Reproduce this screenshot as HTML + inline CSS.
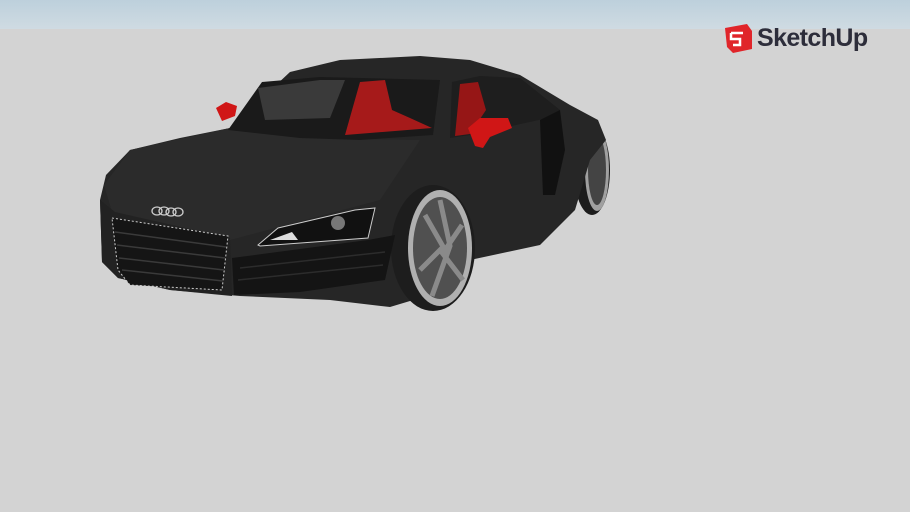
<!DOCTYPE html>
<html><head><style>
html,body{margin:0;padding:0;width:910px;height:512px;overflow:hidden;background:#d3d3d3;}
.sky{position:absolute;left:0;top:0;width:910px;height:29px;background:linear-gradient(#bdd0dc,#cfdbe2);}
.logo{position:absolute;left:757px;top:24px;font-family:"Liberation Sans",sans-serif;font-weight:bold;font-size:25px;color:#2d2d3a;letter-spacing:-0.6px;}
svg{position:absolute;left:0;top:0;}
</style></head><body>
<div class="sky"></div>
<svg width="910" height="512">
  <polygon points="725,28 747,24 752,31 752,49 733,53 727,47" fill="#e0252a"/>
  <path d="M731,33 h12 M731,33 v6 h9 v6 h-7" stroke="#fff" stroke-width="2.5" fill="none"/>
  <ellipse cx="592" cy="170" rx="18" ry="45" fill="#1c1c1c"/>
  <ellipse cx="597" cy="170" rx="12" ry="41" fill="#a0a0a0"/>
  <ellipse cx="597" cy="170" rx="9" ry="35" fill="#444"/>
  <path d="M100,200 L106,175 L130,150 L180,138 L230,128 L290,72 L340,60 L420,56 L470,60 L520,75 L570,105 L598,120 L606,140 L590,160 L575,210 L540,245 L470,260 L430,295 L390,307 L330,300 L240,296 L170,290 L118,278 L102,262 Z" fill="#262626"/>
  <path d="M104,185 L130,150 L230,128 L300,138 L420,140 L380,200 L230,240 L112,212 Z" fill="#2b2b2b"/>
  <path d="M228,130 L262,82 L320,77 L440,80 L433,135 L360,140 L300,138 Z" fill="#1a1a1a"/>
  <path d="M258,88 L320,80 L345,80 L330,118 L265,120 Z" fill="#3a3a3a"/>
  <path d="M452,82 L480,76 L520,78 L560,110 L548,118 L470,135 L450,138 Z" fill="#1e1e1e"/>
  <path d="M360,82 L385,80 L392,110 L410,118 L432,128 L345,135 Z" fill="#a61a1a"/>
  <path d="M460,84 L478,82 L486,110 L470,134 L455,136 Z" fill="#961616"/>
  <path d="M216,108 L226,102 L237,106 L235,116 L222,121 Z" fill="#d01616"/>
  <path d="M468,128 L480,118 L508,118 L512,128 L490,137 L483,148 L475,146 Z" fill="#d01616"/>
  <path d="M540,120 L560,110 L565,150 L555,195 L543,195 Z" fill="#111"/>
  <ellipse cx="433" cy="248" rx="42" ry="63" fill="#1d1d1d"/>
  <ellipse cx="440" cy="248" rx="32" ry="58" fill="#b0b0b0"/>
  <ellipse cx="440" cy="248" rx="27" ry="51" fill="#505050"/>
  <path d="M440,200 L450,246 L432,296 M425,215 L445,250 L462,225 M420,270 L440,250 L463,280" stroke="#8a8a8a" stroke-width="5" fill="none"/>
  <path d="M100,200 L115,212 L230,238 L232,296 L170,290 L118,278 L102,262 Z" fill="#222"/>
  <path d="M112,218 L228,236 L222,290 L130,285 L118,270 Z" fill="#151515" stroke="#ccc" stroke-width="1" stroke-dasharray="2,2"/>
  <g stroke="#3a3a3a" stroke-width="1.5">
   <line x1="115" y1="232" x2="226" y2="247"/><line x1="117" y1="245" x2="225" y2="258"/>
   <line x1="119" y1="258" x2="224" y2="270"/><line x1="122" y1="270" x2="223" y2="281"/>
  </g>
  <g fill="none" stroke="#ccc" stroke-width="1.3">
   <ellipse cx="157" cy="211" rx="5" ry="4"/><ellipse cx="164" cy="211" rx="5" ry="4"/>
   <ellipse cx="171" cy="212" rx="5" ry="4"/><ellipse cx="178" cy="212" rx="5" ry="4"/>
  </g>
  <path d="M258,245 L278,228 L355,210 L375,208 L368,238 L260,246 Z" fill="#111" stroke="#ccc" stroke-width="1"/>
  <circle cx="338" cy="223" r="7" fill="#777"/>
  <path d="M270,240 L292,232 L298,240 Z" fill="#ddd"/>
  <path d="M232,258 L368,240 L395,235 L385,280 L300,292 L234,295 Z" fill="#141414"/>
  <g stroke="#2c2c2c" stroke-width="1.5"><line x1="240" y1="268" x2="385" y2="252"/><line x1="238" y1="280" x2="383" y2="265"/></g>
</svg>
<div class="logo">SketchUp</div>
</body></html>
